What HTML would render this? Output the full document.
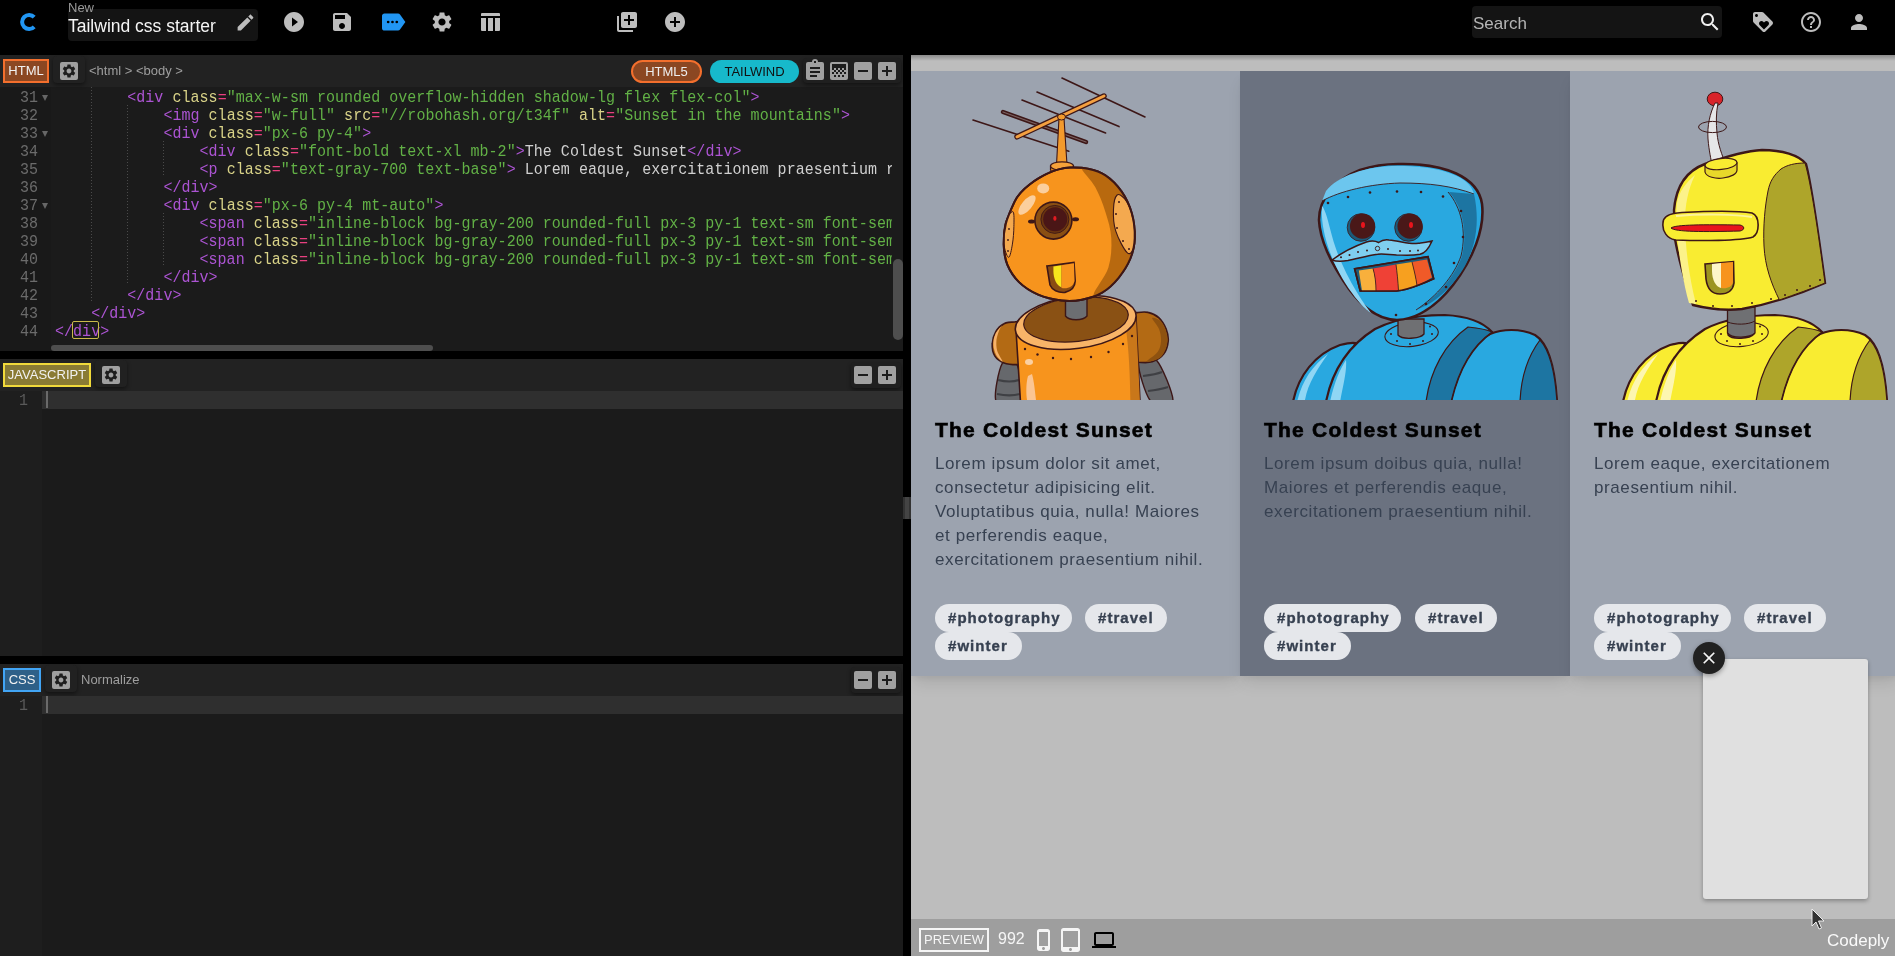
<!DOCTYPE html>
<html><head><meta charset="utf-8">
<style>
*{box-sizing:border-box;margin:0;padding:0}
html,body{width:1895px;height:956px;overflow:hidden;background:#000;font-family:"Liberation Sans",sans-serif}
#top,#editor,#preview{will-change:transform}
.abs{position:absolute}
.ico{position:absolute;display:block}
#top{position:absolute;left:0;top:0;width:1895px;height:55px;background:#000}
.panel{position:absolute;left:0;width:903px;background:#1b1b1b;overflow:hidden}
.phead{position:absolute;left:0;top:0;width:903px;height:32px;background:#222}
.badge{position:absolute;height:24px;border:2px solid;font-size:13px;color:#f2f2f2;line-height:20px;text-align:center}
.btnwrap{position:absolute;border-radius:4px;background:#212121;box-shadow:0 2px 4px rgba(0,0,0,.45)}
.gbtn{position:absolute;width:18px;height:18px;background:#a0a0a0;border-radius:2px}
.code{position:absolute;left:0;top:32px;width:892px;height:264px;font-family:"Liberation Mono",monospace;font-size:15px;line-height:18px;white-space:pre;color:#ccc;overflow:hidden;letter-spacing:0.03px}
.ln{position:absolute;left:0;width:38px;text-align:right;color:#6b6b6b;transform:translateY(3px) scaleY(1.1);transform-origin:0 12px}
.cl{position:absolute;left:55px;transform:translateY(3px) scaleY(1.1);transform-origin:0 12px}
.guide{position:absolute;width:1px;background:repeating-linear-gradient(to bottom,#4a4a4a 0 1px,transparent 1px 3px)}
.fold{position:absolute;left:42px;width:0;height:0;margin-top:8px;border-left:3px solid transparent;border-right:3px solid transparent;border-top:6px solid #666}
.t{color:#ac54d3}.a{color:#d9d388}.e{color:#e8407f}.s{color:#62b146}.x{color:#d0d0d0}
.gut{position:absolute;left:0;top:32px;width:42px;bottom:0;background:#1e1e1e}
.hl{position:absolute;left:42px;top:33px;width:861px;height:18px;background:#2f2f2f}
.cur{position:absolute;left:46px;top:34px;width:2px;height:17px;background:#6a6a6a}
.ln1{position:absolute;left:0;top:33px;width:28px;text-align:right;font-family:"Liberation Mono",monospace;font-size:15px;line-height:18px;color:#5a5a5a;transform:translateY(3px) scaleY(1.1);transform-origin:0 12px}
#preview{position:absolute;left:911px;top:55px;width:984px;height:901px;background:#bdbdbd;overflow:hidden}
.card{position:absolute;top:16px;height:605px;background:#9ca3af;box-shadow:0 10px 15px -3px rgba(0,0,0,.1),0 4px 6px -2px rgba(0,0,0,.05);overflow:hidden}
.card h3{position:absolute;left:24px;top:345px;font-size:21px;font-weight:bold;line-height:28px;color:#000;white-space:nowrap;letter-spacing:1.22px;-webkit-text-stroke:0.6px #000}
.card p{position:absolute;left:24px;top:381px;width:320px;font-size:17px;line-height:24px;color:#374151;white-space:nowrap;letter-spacing:0.6px}
.tag{position:absolute;height:28px;border-radius:14px;background:#e5e7eb;color:#374151;font-size:15px;font-weight:bold;letter-spacing:1.05px;-webkit-text-stroke:0.35px #374151;line-height:28px;white-space:nowrap;text-align:left;padding-left:13px}
.rob{position:absolute;left:0;top:0}
#pbar{position:absolute;left:0;top:864px;width:984px;height:37px;background:#9e9e9e}
</style></head><body>
<div id="top">
<svg class="ico" style="left:19px;top:11px" width="18" height="22" viewBox="0 0 18 22"><path d="M15.2 6.2A7 7 0 1 0 15.2 15.8" fill="none" stroke="#2196f3" stroke-width="4"/></svg>
<div class="abs" style="left:68px;top:9px;width:190px;height:32px;background:#141414;border-radius:4px"></div>
<div class="abs" style="left:68px;top:1px;font-size:13px;color:#9a9a9a;line-height:14px">New</div>
<div class="abs" style="left:68px;top:15px;font-size:17.5px;color:#f5f5f5;line-height:22px">Tailwind css starter</div>
<svg class="ico" style="left:235px;top:12px" width="21" height="21" viewBox="0 0 24 24" preserveAspectRatio="none"><path fill="#bdbdbd" d="M3 17.25V21h3.75L17.81 9.94l-3.75-3.75L3 17.25zM20.71 7.04c.39-.39.39-1.02 0-1.41l-2.34-2.34c-.39-.39-1.02-.39-1.41 0l-1.83 1.83 3.75 3.75 1.83-1.83z"/></svg>
<svg class="ico" style="left:282px;top:10px" width="24" height="24" viewBox="0 0 24 24" preserveAspectRatio="none"><path fill="#bdbdbd" d="M12 2C6.48 2 2 6.48 2 12s4.48 10 10 10 10-4.48 10-10S17.52 2 12 2zm-2 14.5v-9l6 4.5-6 4.5z"/></svg>
<svg class="ico" style="left:330px;top:10px" width="24" height="24" viewBox="0 0 24 24" preserveAspectRatio="none"><path fill="#bdbdbd" d="M17 3H5c-1.11 0-2 .9-2 2v14c0 1.1.89 2 2 2h14c1.1 0 2-.9 2-2V7l-4-4zm-5 16c-1.66 0-3-1.34-3-3s1.34-3 3-3 3 1.34 3 3-1.34 3-3 3zm3-10H5V5h10v4z"/></svg>
<svg class="ico" style="left:382px;top:9px" width="24" height="26" viewBox="3 4 19.5 16"><path fill="#2196f3" d="M17.63 5.84C17.27 5.33 16.67 5 16 5L5 5.01C3.9 5.01 3 5.9 3 7v10c0 1.1.9 1.99 2 1.99L16 19c.67 0 1.27-.33 1.63-.84L22 12l-4.37-6.16z"/><circle cx="8" cy="12" r="1.1" fill="#000"/><circle cx="11.5" cy="12" r="1.1" fill="#000"/><circle cx="15" cy="12" r="1.1" fill="#000"/></svg>
<svg class="ico" style="left:430px;top:10px" width="24" height="24" viewBox="0 0 24 24" preserveAspectRatio="none"><path fill="#bdbdbd" d="M19.14 12.94c.04-.3.06-.61.06-.94 0-.32-.02-.64-.07-.94l2.03-1.58c.18-.14.23-.41.12-.61l-1.92-3.32c-.12-.22-.37-.29-.59-.22l-2.39.96c-.5-.38-1.030-.7-1.62-.94l-.36-2.54c-.04-.24-.24-.41-.48-.41h-3.84c-.24 0-.43.17-.47.41l-.36 2.54c-.59.24-1.13.57-1.62.94l-2.39-.96c-.22-.08-.47 0-.59.22L2.74 8.87c-.12.21-.08.47.12.61l2.03 1.58c-.05.3-.09.63-.09.94s.02.64.07.94l-2.03 1.58c-.18.14-.23.41-.12.61l1.92 3.320c.12.22.37.29.59.22l2.39-.96c.5.38 1.03.7 1.62.94l.36 2.54c.05.24.24.41.48.41h3.84c.24 0 .44-.17.47-.41l.36-2.54c.59-.24 1.13-.56 1.62-.94l2.39.96c.22.08.47 0 .59-.22l1.92-3.32c.12-.22.07-.47-.12-.61l-2.01-1.58zM12 15.6c-1.98 0-3.6-1.62-3.6-3.6s1.62-3.6 3.6-3.6 3.6 1.62 3.6 3.6-1.62 3.6-3.6 3.6z"/></svg>
<svg class="ico" style="left:481px;top:13px" width="19" height="18" viewBox="0 0 19 18"><path fill="#bdbdbd" d="M1 0h17a1 1 0 0 1 1 1v2H0V1a1 1 0 0 1 1-1z M0 5h5v13H1a1 1 0 0 1-1-1z M7 5h5v13H7z M14 5h5v12a1 1 0 0 1-1 1h-4z"/></svg>
<svg class="ico" style="left:615px;top:10px" width="24" height="24" viewBox="0 0 24 24" preserveAspectRatio="none"><path fill="#bdbdbd" d="M4 6H2v14c0 1.1.9 2 2 2h14v-2H4V6zm16-4H8c-1.1 0-2 .9-2 2v12c0 1.1.9 2 2 2h12c1.1 0 2-.9 2-2V4c0-1.1-.9-2-2-2zm-1 9h-4v4h-2v-4H9V9h4V5h2v4h4v2z"/></svg>
<svg class="ico" style="left:663px;top:10px" width="24" height="24" viewBox="0 0 24 24" preserveAspectRatio="none"><path fill="#bdbdbd" d="M12 2C6.48 2 2 6.48 2 12s4.48 10 10 10 10-4.48 10-10S17.52 2 12 2zm5 11h-4v4h-2v-4H7v-2h4V7h2v4h4v2z"/></svg>
<div class="abs" style="left:1472px;top:6px;width:250px;height:32px;background:#141414;border-radius:4px"></div>
<div class="abs" style="left:1473px;top:13px;font-size:17px;color:#b5b5b5;line-height:22px">Search</div>
<svg class="ico" style="left:1698px;top:10px" width="24" height="24" viewBox="0 0 24 24" preserveAspectRatio="none"><path fill="#f0f0f0" d="M15.5 14h-.79l-.28-.27C15.41 12.59 16 11.110 16 9.5 16 5.91 13.09 3 9.5 3S3 5.91 3 9.5 5.91 16 9.5 16c1.61 0 3.09-.59 4.23-1.57l.27.28v.79l5 4.99L20.49 19l-4.99-5zm-6 0C7.01 14 5 11.99 5 9.5S7.01 5 9.5 5 14 7.01 14 9.5 11.99 14 9.5 14z"/></svg>
<svg class="ico" style="left:1751px;top:10px" width="24" height="24" viewBox="0 0 24 24" preserveAspectRatio="none"><path fill="#bdbdbd" d="M21.41 11.58l-9-9C12.05 2.22 11.55 2 11 2H4c-1.1 0-2 .9-2 2v7c0 .55.22 1.05.59 1.42l9 9c.36.36.86.58 1.41.58.55 0 1.05-.22 1.41-.59l7-7c.37-.36.59-.86.59-1.41 0-.55-.23-1.06-.59-1.42zM5.5 7C4.67 7 4 6.33 4 5.5S4.67 4 5.5 4 7 4.67 7 5.5 6.33 7 5.5 7zm11.77 8.27L13 19.54l-4.27-4.270C8.28 14.81 8 14.19 8 13.5c0-1.38 1.12-2.5 2.5-2.5.69 0 1.32.28 1.77.74l.73.72.73-.73c.45-.45 1.08-.73 1.77-.73 1.38 0 2.5 1.12 2.5 2.5 0 .69-.28 1.32-.73 1.77z"/></svg>
<svg class="ico" style="left:1799px;top:10px" width="24" height="24" viewBox="0 0 24 24" preserveAspectRatio="none"><path fill="#bdbdbd" d="M11 18h2v-2h-2v2zm1-16C6.48 2 2 6.48 2 12s4.48 10 10 10 10-4.48 10-10S17.52 2 12 2zm0 18c-4.41 0-8-3.59-8-8s3.59-8 8-8 8 3.59 8 8-3.59 8-8 8zm0-14c-2.21 0-4 1.79-4 4h2c0-1.1.9-2 2-2s2 .9 2 2c0 2-3 1.75-3 5h2c0-2.25 3-2.5 3-5 0-2.21-1.79-4-4-4z"/></svg>
<svg class="ico" style="left:1847px;top:10px" width="24" height="24" viewBox="0 0 24 24" preserveAspectRatio="none"><path fill="#bdbdbd" d="M12 12c2.21 0 4-1.79 4-4s-1.79-4-4-4-4 1.790-4 4 1.79 4 4 4zm0 2c-2.67 0-8 1.34-8 4v2h16v-2c0-2.66-5.33-4-8-4z"/></svg>
</div>

<div id="editor" class="abs" style="left:0;top:55px;width:911px;height:901px;background:#000">
  <!-- HTML panel -->
  <div class="panel" style="top:0;height:296px">
    <div class="phead">
      <div class="badge" style="left:3px;top:4px;width:46px;background:#8b4722;border-color:#f36f2d">HTML</div>
      <div class="btnwrap" style="left:53px;top:1px;width:32px;height:27px"></div>
      <div class="gbtn" style="left:60px;top:7px"><svg class="ico" style="left:1px;top:1px" width="16" height="16" viewBox="0 0 24 24"><path fill="#1e1e1e" d="M19.14 12.94c.04-.3.06-.61.06-.94 0-.32-.02-.64-.07-.94l2.03-1.58c.18-.14.23-.41.12-.61l-1.92-3.32c-.12-.22-.37-.29-.59-.22l-2.39.96c-.5-.38-1.030-.7-1.62-.94l-.36-2.54c-.04-.24-.24-.41-.48-.41h-3.84c-.24 0-.43.17-.47.41l-.36 2.54c-.59.24-1.13.57-1.62.94l-2.39-.96c-.22-.08-.47 0-.59.22L2.74 8.87c-.12.21-.08.47.12.61l2.03 1.58c-.05.3-.09.63-.09.94s.02.64.07.94l-2.03 1.58c-.18.14-.23.41-.12.61l1.92 3.320c.12.22.37.29.59.22l2.39-.96c.5.38 1.03.7 1.62.94l.36 2.54c.05.24.24.41.48.41h3.84c.24 0 .44-.17.47-.41l.36-2.54c.59-.24 1.13-.56 1.62-.94l2.39.96c.22.08.47 0 .59-.22l1.92-3.32c.12-.22.07-.47-.12-.61l-2.01-1.58zM12 15.6c-1.98 0-3.6-1.62-3.6-3.6s1.62-3.6 3.6-3.6 3.6 1.62 3.6 3.6-1.62 3.6-3.6 3.6z"/></svg></div>
      <div class="abs" style="left:89px;top:8px;font-size:13px;color:#9e9e9e;line-height:16px">&lt;html &gt; &lt;body &gt;</div>
      <div class="abs" style="left:631px;top:5px;width:71px;height:23px;border-radius:12px;background:#8b4722;border:2px solid #f36f2d;color:#eee;font-size:13px;line-height:19px;text-align:center">HTML5</div>
      <div class="abs" style="left:710px;top:5px;width:89px;height:23px;border-radius:12px;background:#17b9cb;color:#111;font-size:13px;line-height:23px;text-align:center">TAILWIND</div>
      <div class="btnwrap" style="left:803px;top:3px;width:98px;height:25px;background:#1f1f1f"></div>
      <div class="gbtn" style="left:806px;top:7px"><svg class="ico" style="left:0;top:0" width="18" height="18" viewBox="0 0 18 18"><rect x="4" y="5" width="10" height="2" fill="#1c1c1c"/><rect x="4" y="9" width="10" height="2" fill="#1c1c1c"/><rect x="4" y="13" width="7" height="2" fill="#1c1c1c"/></svg></div>
      <div class="abs" style="left:812px;top:4px;width:6px;height:6px;border-radius:3px;background:#a0a0a0"></div>
      <div class="abs" style="left:814px;top:6px;width:2px;height:2px;background:#1c1c1c"></div>
      <div class="gbtn" style="left:830px;top:7px"><svg class="ico" style="left:0;top:0" width="18" height="18" viewBox="0 0 18 18"><rect x="2" y="2" width="14" height="4" fill="#1c1c1c"/><g fill="#1c1c1c"><rect x="2" y="6" width="2" height="2"/><rect x="6" y="6" width="2" height="2"/><rect x="10" y="6" width="2" height="2"/><rect x="14" y="6" width="2" height="2"/><rect x="4" y="8" width="2" height="2"/><rect x="8" y="8" width="2" height="2"/><rect x="12" y="8" width="2" height="2"/><rect x="2" y="10" width="2" height="2"/><rect x="6" y="10" width="2" height="2"/><rect x="10" y="10" width="2" height="2"/><rect x="14" y="10" width="2" height="2"/><rect x="4" y="13" width="2" height="2"/><rect x="8" y="13" width="2" height="2"/><rect x="12" y="13" width="2" height="2"/></g></svg></div>
      <div class="gbtn" style="left:854px;top:7px"><div class="abs" style="left:4px;top:8px;width:10px;height:2px;background:#1c1c1c"></div></div>
      <div class="gbtn" style="left:878px;top:7px"><div class="abs" style="left:4px;top:8px;width:10px;height:2px;background:#1c1c1c"></div><div class="abs" style="left:8px;top:4px;width:2px;height:10px;background:#1c1c1c"></div></div>
    </div>
    <div class="abs" style="left:0;top:32px;width:51px;height:264px;background:#191919"></div>
    <div class="code">
<div class="guide" style="left:91px;top:0;height:216px"></div>
<div class="guide" style="left:127px;top:18px;height:180px"></div>
<div class="guide" style="left:163px;top:54px;height:36px"></div>
<div class="guide" style="left:163px;top:126px;height:54px"></div>
<div class="ln" style="top:0px">31</div>
<div class="fold" style="top:0px"></div>
<div class="cl" style="top:0px">        <span class="t">&lt;div</span> <span class="a">class</span><span class="e">=</span><span class="s">"max-w-sm rounded overflow-hidden shadow-lg flex flex-col"</span><span class="t">&gt;</span></div>
<div class="ln" style="top:18px">32</div>
<div class="cl" style="top:18px">            <span class="t">&lt;img</span> <span class="a">class</span><span class="e">=</span><span class="s">"w-full"</span> <span class="a">src</span><span class="e">=</span><span class="s">"//robohash.org/t34f"</span> <span class="a">alt</span><span class="e">=</span><span class="s">"Sunset in the mountains"</span><span class="t">&gt;</span></div>
<div class="ln" style="top:36px">33</div>
<div class="fold" style="top:36px"></div>
<div class="cl" style="top:36px">            <span class="t">&lt;div</span> <span class="a">class</span><span class="e">=</span><span class="s">"px-6 py-4"</span><span class="t">&gt;</span></div>
<div class="ln" style="top:54px">34</div>
<div class="cl" style="top:54px">                <span class="t">&lt;div</span> <span class="a">class</span><span class="e">=</span><span class="s">"font-bold text-xl mb-2"</span><span class="t">&gt;</span><span class="x">The Coldest Sunset</span><span class="t">&lt;/div&gt;</span></div>
<div class="ln" style="top:72px">35</div>
<div class="cl" style="top:72px">                <span class="t">&lt;p</span> <span class="a">class</span><span class="e">=</span><span class="s">"text-gray-700 text-base"</span><span class="t">&gt;</span><span class="x"> Lorem eaque, exercitationem praesentium r</span></div>
<div class="ln" style="top:90px">36</div>
<div class="cl" style="top:90px">            <span class="t">&lt;/div&gt;</span></div>
<div class="ln" style="top:108px">37</div>
<div class="fold" style="top:108px"></div>
<div class="cl" style="top:108px">            <span class="t">&lt;div</span> <span class="a">class</span><span class="e">=</span><span class="s">"px-6 py-4 mt-auto"</span><span class="t">&gt;</span></div>
<div class="ln" style="top:126px">38</div>
<div class="cl" style="top:126px">                <span class="t">&lt;span</span> <span class="a">class</span><span class="e">=</span><span class="s">"inline-block bg-gray-200 rounded-full px-3 py-1 text-sm font-semibold text-gray-700 mr-2"</span><span class="t">&gt;</span></div>
<div class="ln" style="top:144px">39</div>
<div class="cl" style="top:144px">                <span class="t">&lt;span</span> <span class="a">class</span><span class="e">=</span><span class="s">"inline-block bg-gray-200 rounded-full px-3 py-1 text-sm font-semibold text-gray-700 mr-2"</span><span class="t">&gt;</span></div>
<div class="ln" style="top:162px">40</div>
<div class="cl" style="top:162px">                <span class="t">&lt;span</span> <span class="a">class</span><span class="e">=</span><span class="s">"inline-block bg-gray-200 rounded-full px-3 py-1 text-sm font-semibold text-gray-700 mr-2"</span><span class="t">&gt;</span></div>
<div class="ln" style="top:180px">41</div>
<div class="cl" style="top:180px">            <span class="t">&lt;/div&gt;</span></div>
<div class="ln" style="top:198px">42</div>
<div class="cl" style="top:198px">        <span class="t">&lt;/div&gt;</span></div>
<div class="ln" style="top:216px">43</div>
<div class="cl" style="top:216px">    <span class="t">&lt;/div&gt;</span></div>
<div class="ln" style="top:234px">44</div>
<div class="cl" style="top:234px"><span class="t">&lt;/</span><span class="t">div</span><span class="t">&gt;</span></div>
<div class="abs" style="left:72px;top:234px;width:27px;height:18px;border:1px solid #c9b94a;border-radius:2px"></div>
    </div>
    <div class="abs" style="left:893px;top:204px;width:10px;height:81px;background:#4e4e4e;border-radius:5px"></div>
    <div class="abs" style="left:51px;top:290px;width:382px;height:6px;background:#4e4e4e;border-radius:3px"></div>
  </div>

  <!-- JS panel -->
  <div class="panel" style="top:304px;height:297px">
    <div class="phead">
      <div class="badge" style="left:3px;top:4px;width:88px;background:#8a7b34;border-color:#f1da3b">JAVASCRIPT</div>
      <div class="btnwrap" style="left:95px;top:1px;width:32px;height:27px"></div>
      <div class="gbtn" style="left:102px;top:7px"><svg class="ico" style="left:1px;top:1px" width="16" height="16" viewBox="0 0 24 24"><path fill="#1e1e1e" d="M19.14 12.94c.04-.3.06-.61.06-.94 0-.32-.02-.64-.07-.94l2.03-1.58c.18-.14.23-.41.12-.61l-1.92-3.32c-.12-.22-.37-.29-.59-.22l-2.39.96c-.5-.38-1.030-.7-1.62-.94l-.36-2.54c-.04-.24-.24-.41-.48-.41h-3.84c-.24 0-.43.17-.47.41l-.36 2.54c-.59.24-1.13.57-1.62.94l-2.39-.96c-.22-.08-.47 0-.59.22L2.74 8.87c-.12.21-.08.47.12.61l2.03 1.58c-.05.3-.09.63-.09.94s.02.64.07.94l-2.03 1.58c-.18.14-.23.41-.12.61l1.92 3.320c.12.22.37.29.59.22l2.39-.96c.5.38 1.03.7 1.62.94l.36 2.54c.05.24.24.41.48.41h3.84c.24 0 .44-.17.47-.41l.36-2.54c.59-.24 1.13-.56 1.62-.94l2.39.96c.22.08.47 0 .59-.22l1.92-3.32c.12-.22.07-.47-.12-.61l-2.01-1.58zM12 15.6c-1.98 0-3.6-1.62-3.6-3.6s1.62-3.6 3.6-3.6 3.6 1.62 3.6 3.6-1.62 3.6-3.6 3.6z"/></svg></div>
      <div class="btnwrap" style="left:851px;top:3px;width:50px;height:26px;background:#1f1f1f"></div>
      <div class="gbtn" style="left:854px;top:7px"><div class="abs" style="left:4px;top:8px;width:10px;height:2px;background:#1c1c1c"></div></div>
      <div class="gbtn" style="left:878px;top:7px"><div class="abs" style="left:4px;top:8px;width:10px;height:2px;background:#1c1c1c"></div><div class="abs" style="left:8px;top:4px;width:2px;height:10px;background:#1c1c1c"></div></div>
    </div>
    <div class="gut"></div>
    <div class="hl" style="top:32px"></div>
    <div class="cur" style="top:32px"></div>
    <div class="ln1" style="top:30.5px">1</div>
  </div>

  <!-- CSS panel -->
  <div class="panel" style="top:609px;height:292px">
    <div class="phead">
      <div class="badge" style="left:3px;top:4px;width:38px;background:#2e6088;border-color:#42a5f5">CSS</div>
      <div class="btnwrap" style="left:45px;top:1px;width:32px;height:27px"></div>
      <div class="gbtn" style="left:52px;top:7px"><svg class="ico" style="left:1px;top:1px" width="16" height="16" viewBox="0 0 24 24"><path fill="#1e1e1e" d="M19.14 12.94c.04-.3.06-.61.06-.94 0-.32-.02-.64-.07-.94l2.03-1.58c.18-.14.23-.41.12-.61l-1.92-3.32c-.12-.22-.37-.29-.59-.22l-2.39.96c-.5-.38-1.030-.7-1.62-.94l-.36-2.54c-.04-.24-.24-.41-.48-.41h-3.84c-.24 0-.43.17-.47.41l-.36 2.54c-.59.24-1.13.57-1.62.94l-2.39-.96c-.22-.08-.47 0-.59.22L2.74 8.87c-.12.21-.08.47.12.61l2.03 1.58c-.05.3-.09.63-.09.94s.02.64.07.94l-2.03 1.58c-.18.14-.23.41-.12.61l1.92 3.320c.12.22.37.29.59.22l2.39-.96c.5.38 1.03.7 1.62.94l.36 2.54c.05.24.24.41.48.41h3.84c.24 0 .44-.17.47-.41l.36-2.54c.59-.24 1.13-.56 1.62-.94l2.39.96c.22.08.47 0 .59-.22l1.92-3.32c.12-.22.07-.47-.12-.61l-2.01-1.58zM12 15.6c-1.98 0-3.6-1.62-3.6-3.6s1.62-3.6 3.6-3.6 3.6 1.62 3.6 3.6-1.62 3.6-3.6 3.6z"/></svg></div>
      <div class="abs" style="left:81px;top:8px;font-size:13px;color:#9e9e9e;line-height:16px">Normalize</div>
      <div class="btnwrap" style="left:851px;top:3px;width:50px;height:26px;background:#1f1f1f"></div>
      <div class="gbtn" style="left:854px;top:7px"><div class="abs" style="left:4px;top:8px;width:10px;height:2px;background:#1c1c1c"></div></div>
      <div class="gbtn" style="left:878px;top:7px"><div class="abs" style="left:4px;top:8px;width:10px;height:2px;background:#1c1c1c"></div><div class="abs" style="left:8px;top:4px;width:2px;height:10px;background:#1c1c1c"></div></div>
    </div>
    <div class="gut"></div>
    <div class="hl" style="top:32px"></div>
    <div class="cur" style="top:32px"></div>
    <div class="ln1" style="top:30.5px">1</div>
  </div>
  <div class="abs" style="left:903px;top:442px;width:8px;height:22px;background:#333"></div><div class="abs" style="left:905px;top:442px;width:4px;height:22px;background:#444"></div>
</div>

<div id="preview">
  <div class="abs" style="left:0;top:0;width:984px;height:6px;background:linear-gradient(#8a8a8a,#bdbdbd)"></div>
  <div class="card" style="left:0;width:329px">
    <div class="rob"><svg width="329" height="329" viewBox="0 0 329 329" style="position:absolute;left:0;top:0">
<g stroke="#3d1717" stroke-linecap="round" fill="none">
  <line x1="151" y1="7" x2="234" y2="46" stroke-width="1.6"/>
  <line x1="126" y1="21" x2="208" y2="55.6" stroke-width="1.6"/>
  <line x1="111" y1="29" x2="194.6" y2="62" stroke-width="1.6"/>
  <line x1="62" y1="49" x2="157.8" y2="80.3" stroke-width="1.6"/>
  <line x1="92" y1="41" x2="175" y2="71" stroke-width="4.5"/>
  <line x1="92" y1="41" x2="175" y2="71" stroke-width="1.3" stroke="#7a6060"/>
</g>
<line x1="106" y1="65.8" x2="193" y2="25" stroke="#3d1717" stroke-width="5.5" stroke-linecap="round"/>
<line x1="106" y1="65.8" x2="193" y2="25" stroke="#f4a040" stroke-width="3" stroke-linecap="round"/>
<path d="M148,47 L153,47 L156,94 L145.5,94 Z" fill="#f39a2c" stroke="#3d1717" stroke-width="1.1"/>
<ellipse cx="150.5" cy="46" rx="4" ry="3" fill="#f39a2c" stroke="#3d1717" stroke-width="1"/>
<path d="M139.5,95 L139.5,99 C140,103 162,103 162.5,99 L162.5,95 Z" fill="#d98520" stroke="#3d1717" stroke-width="1.2"/><ellipse cx="151" cy="95" rx="11.5" ry="4.2" fill="#f6a23a" stroke="#3d1717" stroke-width="1.2"/>
<!-- arms -->
<path d="M91.4,292.2 C94.8,286.0 103.0,286.9 105.9,293.3 C108.9,299.7 112.5,324.5 109.0,330.7 C105.6,336.9 88.2,337.1 85.2,330.7 C82.3,324.3 87.9,298.4 91.4,292.2Z" fill="#66686c" stroke="#3d1717" stroke-width="1.4"/>
<path d="M87,309 C95,311 102,311 108,309 M86,323 C95,325 102,325 109,323" stroke="#3f4044" stroke-width="2.2" fill="none"/>
<path d="M227.6,291.3 C228.5,284.3 239.8,282.6 245.5,289.2 C251.3,295.8 262.8,323.8 261.9,330.7 C260.9,337.6 245.8,337.3 240.1,330.7 C234.4,324.1 226.7,298.2 227.6,291.3Z" fill="#66686c" stroke="#3d1717" stroke-width="1.4"/>
<path d="M232,305 C240,304 246,303 251,301 M237,320 C245,319 251,318 257,316" stroke="#3f4044" stroke-width="2.2" fill="none"/>
<!-- shoulders -->
<path d="M116.1,252.5 C114.1,245.7 107.7,250.8 103.9,250.9 C100.0,250.9 96.2,251.1 93.0,252.8 C89.8,254.4 86.8,257.3 84.8,260.7 C82.9,264.0 81.3,268.8 81.2,272.9 C81.0,277.0 81.9,282.0 83.9,285.1 C85.9,288.3 89.3,290.5 93.0,291.9 C96.7,293.3 102.1,293.6 105.9,293.6 C109.8,293.6 114.4,298.8 116.1,291.9 C117.8,285.1 118.1,259.4 116.1,252.5Z" fill="#b36a14" stroke="#3d1717" stroke-width="1.6"/>
<path d="M91.0,254.5 C90.3,255.2 85.6,260.1 84.2,263.4 C82.7,266.7 82.2,270.7 82.4,274.3 C82.6,277.8 84.0,281.7 85.5,284.5 C87.1,287.2 91.5,291.4 91.6,290.6 C91.7,289.8 87.2,283.3 86.2,279.7 C85.2,276.1 85.2,272.2 85.5,268.8 C85.9,265.4 87.3,261.7 88.2,259.3 C89.1,256.9 91.6,253.9 91.0,254.5Z" fill="#f7b26a"/>
<path d="M215.4,244.4 C217.2,236.4 222.6,242.1 226.2,241.6 C229.9,241.1 233.5,240.5 237.1,241.4 C240.7,242.2 245.0,244.0 248.0,246.8 C251.0,249.6 253.5,254.0 255.1,257.9 C256.6,261.8 257.6,266.0 257.2,270.2 C256.8,274.4 255.4,279.7 252.7,283.1 C250.1,286.5 245.4,289.5 241.2,290.8 C237.0,292.2 231.9,291.5 227.6,291.3 C223.3,291.0 217.4,297.0 215.4,289.2 C213.3,281.4 213.5,252.3 215.4,244.4Z" fill="#b36a14" stroke="#3d1717" stroke-width="1.6"/>
<path d="M241.2,247.1 C241.0,248.4 246.5,254.1 248.0,257.9 C249.5,261.8 250.3,266.3 250.0,270.2 C249.8,274.0 249.0,277.7 246.6,281.1 C244.2,284.5 235.3,289.7 235.8,290.6 C236.2,291.5 245.9,289.4 249.3,286.5 C252.7,283.6 255.2,277.4 256.1,272.9 C257.1,268.4 255.9,263.2 254.8,259.3 C253.7,255.5 251.6,251.8 249.3,249.8 C247.1,247.7 241.4,245.7 241.2,247.1Z" fill="#8e5210"/>
<!-- body -->
<path d="M105,259 L109.5,331 L229,331 L225,246 Z" fill="#f7941d" stroke="#3d1717" stroke-width="1.6"/>
<path d="M215,258 C218,280 219,305 219.4,331 L229,331 L225,246 Z" fill="#c9771a"/>
<ellipse cx="118" cy="291" rx="4" ry="3" fill="#fbd0a2"/>
<path d="M117,305 C115,312 115,322 116,329 L125,329 C124,320 123,310 121,303 Z" fill="#fbc592"/>
<ellipse cx="164.7" cy="251.5" rx="60.8" ry="26" transform="rotate(-7.5 164.7 251.5)" fill="#f8b468" stroke="#3d1717" stroke-width="1.6"/>
<ellipse cx="165" cy="248.5" rx="52.5" ry="22" transform="rotate(-6 165 248.5)" fill="#8a5114" stroke="#3d1717" stroke-width="1.2"/>
<g fill="#3d1717"><circle cx="114" cy="278" r="1.2"/><circle cx="126.5" cy="283.5" r="1.2"/><circle cx="142" cy="287" r="1.2"/><circle cx="160" cy="288" r="1.2"/><circle cx="180" cy="286" r="1.2"/><circle cx="197.5" cy="281" r="1.2"/><circle cx="212" cy="273" r="1.2"/><circle cx="221" cy="265" r="1.2"/></g>
<!-- neck -->
<path d="M154.5,226 L154.5,245 C158,250 172,250 176,245 L176,226 Z" fill="#6c6e72" stroke="#3d1717" stroke-width="1.4"/>
<!-- head -->
<path d="M159.3,96.6 C154.4,96.8 151.2,97.5 147.6,98.4 C143.9,99.3 140.6,100.6 137.3,102.1 C134.0,103.5 131.0,105.2 127.8,107.2 C124.6,109.1 121.2,111.5 118.3,113.8 C115.4,116.1 112.7,118.3 110.2,121.1 C107.8,123.9 106.2,125.4 103.6,130.6 C101.1,135.9 96.7,145.5 94.9,152.6 C93.0,159.7 92.4,166.2 92.7,173.1 C92.9,179.9 93.8,187.2 96.3,193.6 C98.9,199.9 102.9,206.1 108.0,211.1 C113.2,216.2 120.0,220.5 127.1,223.6 C134.2,226.6 143.2,228.6 150.5,229.5 C157.8,230.3 164.2,230.1 171.0,228.7 C177.8,227.4 185.4,225.1 191.5,221.4 C197.6,217.7 203.0,212.4 207.6,206.8 C212.2,201.1 216.6,194.3 219.3,187.7 C222.0,181.1 223.5,174.8 223.7,167.2 C224.0,159.7 223.0,150.1 220.8,142.3 C218.6,134.5 214.9,126.7 210.5,120.4 C206.1,114.0 200.0,108.0 194.4,104.3 C188.8,100.5 182.7,98.9 176.9,97.7 C171.0,96.4 164.2,96.5 159.3,96.6Z" fill="#f7941d" stroke="#3d1717" stroke-width="2"/>
<path d="M171.0,98.4 C172.2,101.4 180.3,108.9 184.2,116.0 C188.1,123.0 191.7,132.3 194.4,140.9 C197.1,149.4 199.8,157.9 200.3,167.2 C200.8,176.5 200.3,187.2 197.4,196.5 C194.4,205.8 183.7,218.7 182.7,222.9 C181.7,227.0 187.4,224.1 191.5,221.4 C195.7,218.7 203.0,212.4 207.6,206.8 C212.2,201.1 216.6,194.3 219.3,187.7 C222.0,181.1 223.5,174.8 223.7,167.2 C224.0,159.7 223.0,150.1 220.8,142.3 C218.6,134.5 214.9,126.7 210.5,120.4 C206.1,114.0 200.0,108.0 194.4,104.3 C188.8,100.5 180.8,98.6 176.9,97.7 C173.0,96.7 169.8,95.3 171.0,98.4Z" fill="#b8690f"/>
<path d="M206.1,124.0 C204.3,125.7 202.7,132.0 202.5,137.9 C202.2,143.9 202.4,152.6 204.7,159.9 C207.0,167.2 213.3,179.2 216.4,181.9 C219.4,184.5 221.8,179.7 223.0,176.0 C224.2,172.3 224.2,165.8 223.7,159.9 C223.2,154.0 221.8,146.2 220.1,140.9 C218.4,135.5 215.8,130.5 213.5,127.7 C211.2,124.9 208.0,122.3 206.1,124.0Z" fill="#f4a94f" stroke="#3d1717" stroke-width="1.1"/>
<g fill="#3d1717"><circle cx="208" cy="131" r="1"/><circle cx="205" cy="143" r="1"/><circle cx="206" cy="157" r="1"/><circle cx="212" cy="170" r="1"/><circle cx="218" cy="178" r="1"/></g>
<path d="M102.2,140.9 C103.3,142.3 103.0,150.1 102.9,155.5 C102.8,160.9 102.3,167.9 101.4,173.1 C100.6,178.2 99.1,185.8 97.8,186.3 C96.4,186.7 94.2,180.6 93.4,176.0 C92.6,171.4 92.6,163.3 93.1,158.4 C93.6,153.5 94.8,149.6 96.3,146.7 C97.8,143.8 101.1,139.4 102.2,140.9Z" fill="#f4a94f" stroke="#3d1717" stroke-width="1"/>
<g fill="#3d1717"><circle cx="98" cy="158" r="0.9"/><circle cx="97" cy="169" r="0.9"/><circle cx="97" cy="180" r="0.9"/></g>
<path d="M159.3,96.6 C154.4,96.8 151.2,97.5 147.6,98.4 C143.9,99.3 140.6,100.6 137.3,102.1 C134.0,103.5 131.0,105.2 127.8,107.2 C124.6,109.1 121.2,111.5 118.3,113.8 C115.4,116.1 112.7,118.3 110.2,121.1 C107.8,123.9 106.2,125.4 103.6,130.6 C101.1,135.9 96.7,145.5 94.9,152.6 C93.0,159.7 92.4,166.2 92.7,173.1 C92.9,179.9 93.8,187.2 96.3,193.6 C98.9,199.9 102.9,206.1 108.0,211.1 C113.2,216.2 120.0,220.5 127.1,223.6 C134.2,226.6 143.2,228.6 150.5,229.5 C157.8,230.3 164.2,230.1 171.0,228.7 C177.8,227.4 185.4,225.1 191.5,221.4 C197.6,217.7 203.0,212.4 207.6,206.8 C212.2,201.1 216.6,194.3 219.3,187.7 C222.0,181.1 223.5,174.8 223.7,167.2 C224.0,159.7 223.0,150.1 220.8,142.3 C218.6,134.5 214.9,126.7 210.5,120.4 C206.1,114.0 200.0,108.0 194.4,104.3 C188.8,100.5 182.7,98.9 176.9,97.7 C171.0,96.4 164.2,96.5 159.3,96.6Z" fill="none" stroke="#3d1717" stroke-width="2"/>
<ellipse cx="132.2" cy="117.4" rx="6" ry="5" fill="#fbcf9d"/>
<ellipse cx="116" cy="134" rx="5" ry="12" transform="rotate(40 116 134)" fill="#fbcf9d"/>
<!-- eye -->
<ellipse cx="120.5" cy="150.4" rx="3.5" ry="2" fill="#3d1717"/>
<ellipse cx="164.5" cy="148.2" rx="3.5" ry="2" fill="#3d1717"/>
<circle cx="142.4" cy="149.6" r="18.5" fill="#8a4f12" stroke="#3d1717" stroke-width="1.6"/>
<circle cx="143.9" cy="148.4" r="14" fill="#6a3510" stroke="#3d1717" stroke-width="0.9"/>
<circle cx="144.2" cy="148.2" r="12" fill="#4a1616"/>
<ellipse cx="143.9" cy="147.4" rx="1.6" ry="2.3" fill="#e21b22"/>
<!-- mouth -->
<path d="M135.9,195 L163,191.4 L164.2,210 C164,216 160,220 154,221.4 C147,222 141,219 139,214 Z" fill="#8a4c12" stroke="#3d1717" stroke-width="1.6"/>
<path d="M142.4,195.5 L150.5,194.3 L150.5,216.3 C146,215 142.4,208 142.4,200 Z" fill="#f6e61c"/>
<path d="M150.5,194.3 L163,192.3 L163.5,210 C162,216 157,218 150.5,217 Z" fill="#f7941d"/>
</svg></div>
    <h3>The Coldest Sunset</h3>
    <p>Lorem ipsum dolor sit amet,<br>consectetur adipisicing elit.<br>Voluptatibus quia, nulla! Maiores<br>et perferendis eaque,<br>exercitationem praesentium nihil.</p>
    <div class="tag" style="left:24px;top:533px;width:137px">#photography</div>
    <div class="tag" style="left:174px;top:533px;width:82px">#travel</div>
    <div class="tag" style="left:24px;top:561px;width:87px">#winter</div>
  </div>
  <div class="card" style="left:329px;width:330px;background:#6b7280">
    <div class="rob"><svg width="330" height="329" viewBox="0 0 330 329" style="position:absolute;left:0;top:0">
<!-- left shoulder -->
<path d="M53,331 C58,305 75,283 100,274 C108,272 112,271.5 115,272 L105,331 Z" fill="#29a8e0" stroke="#3d1717" stroke-width="2.2"/>
<path d="M57,331 C62,310 72,295 88,283 C78,297 68,312 65,329 Z" fill="#8fd6f4"/>
<!-- right shoulder -->
<path d="M211,331 C213,300 225,275 250,263 C262,258 280,257 295,264 C308,272 315,295 317,331 Z" fill="#29a8e0" stroke="#3d1717" stroke-width="2.2"/>
<path d="M280,331 C281,305 288,285 300,269 C310,280 315,300 317,331 Z" fill="#1d75a2" stroke="#3d1717" stroke-width="1.2"/>
<!-- torso -->
<path d="M86,331 C92,300 108,275 135,258 C155,248 180,244 205,244 C225,245 242,250 252,261 C232,275 218,300 211,331 Z" fill="#29a8e0" stroke="#3d1717" stroke-width="2.2"/>
<path d="M186,331 C190,300 205,272 228,256 C238,257 246,258 252,261 C232,275 218,300 211,331 Z" fill="#1d75a2" stroke="#3d1717" stroke-width="1.2"/>
<path d="M90,331 C94,312 100,298 106,289 C107,300 103,315 100,331 Z" fill="#8fd6f4"/>
<!-- neck ring -->
<ellipse cx="171.6" cy="263.4" rx="26.8" ry="12" transform="rotate(-6 171.6 263.4)" fill="none" stroke="#3d1717" stroke-width="1.1"/>
<path d="M158,248 L158,264 C162,269 180,268 184,263 L184,248 Z" fill="#6f7073" stroke="#3d1717" stroke-width="1.3"/>
<g fill="#3d1717"><circle cx="151" cy="263" r="1"/><circle cx="157" cy="270" r="1"/><circle cx="170" cy="273" r="1"/><circle cx="183" cy="270" r="1"/><circle cx="192" cy="263" r="1"/><circle cx="190" cy="255.5" r="1"/></g>

<!-- head -->
<path d="M158,93 C205,92 238,106 242,133 C245,158 233,188 213,214 C196,236 176,248 157,249 C140,249 124,238 109,218 C94,197 80,172 79,149 C79,126 97,108 120,99 C132,95 145,93 158,93 Z" fill="#29a8e0" stroke="#3d1717" stroke-width="2.6"/>
<path d="M82,130 C100,120 130,113 160,112 C190,112 212,115 234,123 C230,105 200,95 158,95 C125,95 98,105 86,120 Z" fill="#6cc6ee"/>
<path d="M82,130 C100,120 130,113 160,112 C190,112 212,115 234,123" fill="none" stroke="#3d1717" stroke-width="0.9"/>
<path d="M209,121 C222,135 228,160 222,185 C215,205 198,225 178,238 C196,232 214,214 225,195 C236,175 240,150 234,123 Z" fill="#1d75a2"/>
<path d="M208,121 C221,136 227,160 221,185 C214,205 197,225 176,239" fill="none" stroke="#3d1717" stroke-width="0.9"/>
<path d="M82,135 C80,160 92,195 112,222 C122,236 128,240 131,242 C118,225 100,195 92,165 C88,150 86,140 82,135 Z" fill="#8fd6f4"/>
<g fill="#3d1717"><circle cx="88" cy="132" r="1.3"/><circle cx="108" cy="126" r="1.3"/><circle cx="130" cy="121.5" r="1.3"/><circle cx="157" cy="120.5" r="1.3"/><circle cx="181" cy="121" r="1.3"/><circle cx="203" cy="125.5" r="1.3"/><circle cx="221" cy="140" r="1.3"/><circle cx="223" cy="166" r="1.3"/><circle cx="214" cy="192" r="1.3"/><circle cx="206" cy="216" r="1.3"/><circle cx="186" cy="233" r="1.3"/><circle cx="156" cy="244" r="1.3"/></g>
<circle cx="121" cy="156.5" r="13.8" fill="#1b5a7a" stroke="#3d1717" stroke-width="0.8"/><circle cx="122.6" cy="155.2" r="12.6" fill="#4a1818"/>
<circle cx="168.5" cy="156.5" r="13.8" fill="#1b5a7a" stroke="#3d1717" stroke-width="0.8"/><circle cx="170.1" cy="155.2" r="12.6" fill="#4a1818"/>
<ellipse cx="123" cy="154" rx="2" ry="3" fill="#e8141c"/><ellipse cx="171" cy="154" rx="2" ry="3" fill="#e8141c"/>
<path d="M92,189 C100,183 115,175 126.4,171 C131,169.5 135,169.5 138.6,171.5 C142,169 146,168.5 149,169 C160,170 168,173 176,172.5 C182,172 188,171 192,170 C189,177 186,182 180,183.3 C170,185 162,184 156.5,184 C148,183.5 142,182.5 137.7,183.3 C128,184.5 118,187.5 108,189.5 C102,190.5 96,190.5 92,189 Z" fill="#7fcff0" stroke="#3d1717" stroke-width="1.5"/>
<g fill="#3d1717"><circle cx="101" cy="186.3" r="1"/><circle cx="109.5" cy="184" r="1"/><circle cx="118" cy="181" r="1"/><circle cx="127" cy="179.5" r="1"/><circle cx="148" cy="178" r="1"/><circle cx="160" cy="180" r="1"/><circle cx="170" cy="180" r="1"/><circle cx="178" cy="179.5" r="1"/></g>
<circle cx="137.5" cy="177.5" r="2.2" fill="none" stroke="#3d1717" stroke-width="0.9"/>
<path d="M114.6,197.8 L188,185.6 L193.7,207.7 C180,214 168,219 156.5,220 L120.2,220 Z" fill="#1b5a7a" stroke="#3d1717" stroke-width="1.6"/>
<path d="M118.8,199.5 L133,197.5 C135,204 136,212 136,220 L122,220 Z" fill="#f8b03c"/>
<path d="M133,197.5 L156,193.5 C157,201 158,210 158.5,219.8 L136,220 C136,212 135,204 133,197.5 Z" fill="#ef4136"/>
<path d="M156,193.5 L172,191 C174,199 176,207 177,214.5 C170,217.5 164,219 158.5,219.8 C158,210 157,201 156,193.5 Z" fill="#f7a01f"/>
<path d="M172,191 L187,188.5 L192,206.5 C187,209.5 182,212 177,214.5 C176,207 174,199 172,191 Z" fill="#f05a28"/>
<path d="M133,197.5 C135,204 136,212 136,220 M156,193.5 C157,201 158,210 158.5,219.8 M172,191 C174,199 176,207 177,214.5" stroke="#3d1717" stroke-width="0.8" fill="none"/>
<path d="M114.6,197.8 L188,185.6 L193.7,207.7 C180,214 168,219 156.5,220 L120.2,220 Z" fill="none" stroke="#3d1717" stroke-width="1.6"/>
</svg></div>
    <h3>The Coldest Sunset</h3>
    <p>Lorem ipsum doibus quia, nulla!<br>Maiores et perferendis eaque,<br>exercitationem praesentium nihil.</p>
    <div class="tag" style="left:24px;top:533px;width:137px">#photography</div>
    <div class="tag" style="left:175px;top:533px;width:82px">#travel</div>
    <div class="tag" style="left:24px;top:561px;width:87px">#winter</div>
  </div>
  <div class="card" style="left:659px;width:330px">
    <div class="rob"><svg width="330" height="329" viewBox="0 0 330 329" style="position:absolute;left:0;top:0">
<!-- antenna -->
<ellipse cx="145" cy="28" rx="7.8" ry="6.8" fill="#d8232a" stroke="#3d1717" stroke-width="1"/>
<path d="M145,32 C140,42 137,55 138,68 C139,80 141,88 142,94 L156,94 C152,84 148,74 147,62 C146,52 146,42 148,32 Z" fill="#e6e6e8" stroke="#3d1717" stroke-width="1"/>
<ellipse cx="142.5" cy="56" rx="14" ry="5.6" fill="none" stroke="#3d1717" stroke-width="1"/>

<!-- left shoulder -->
<path d="M53,331 C58,305 75,283 100,274 C108,272 112,271.5 115,272 L105,331 Z" fill="#f9ec31" stroke="#3d1717" stroke-width="2.2"/>
<path d="M57,331 C62,310 72,295 88,283 C78,297 68,312 65,329 Z" fill="#fdf6b0"/>
<!-- right shoulder -->
<path d="M211,331 C213,300 225,275 250,263 C262,258 280,257 295,264 C308,272 315,295 317,331 Z" fill="#f9ec31" stroke="#3d1717" stroke-width="2.2"/>
<path d="M280,331 C281,305 288,285 300,269 C310,280 315,300 317,331 Z" fill="#aea52a" stroke="#3d1717" stroke-width="1.2"/>
<!-- torso -->
<path d="M86,331 C92,300 108,275 135,258 C155,248 180,244 205,244 C225,245 242,250 252,261 C232,275 218,300 211,331 Z" fill="#f9ec31" stroke="#3d1717" stroke-width="2.2"/>
<path d="M186,331 C190,300 205,272 228,256 C238,257 246,258 252,261 C232,275 218,300 211,331 Z" fill="#aea52a" stroke="#3d1717" stroke-width="1.2"/>
<path d="M90,331 C94,312 100,298 106,289 C107,300 103,315 100,331 Z" fill="#fdf6b0"/>
<!-- neck ring -->
<ellipse cx="171.6" cy="263.4" rx="26.8" ry="12" transform="rotate(-6 171.6 263.4)" fill="none" stroke="#3d1717" stroke-width="1.1"/>
<path d="M158,248 L158,264 C162,269 180,268 184,263 L184,248 Z" fill="#6f7073" stroke="#3d1717" stroke-width="1.3"/>
<g fill="#3d1717"><circle cx="151" cy="263" r="1"/><circle cx="157" cy="270" r="1"/><circle cx="170" cy="273" r="1"/><circle cx="183" cy="270" r="1"/><circle cx="192" cy="263" r="1"/><circle cx="190" cy="255.5" r="1"/></g>

<path d="M157.5,236 L157.5,262 C162,268 180,267 185,262 L185,236 Z" fill="#6f7073" stroke="#3d1717" stroke-width="1.3"/>
<path d="M157.5,251 C165,254 178,254 185,250" stroke="#3d1717" stroke-width="1" fill="none"/>
<!-- head -->
<path d="M104,139 C106,115 116,100 135,93 C155,86 175,80 192,79 C212,79 229,84 236,93 C241,112 248,160 255,212 C230,223 200,233 172,238 C156,240 139,238 123,234 C115,210 108,185 105,168 Z" fill="#f9ec31" stroke="#3d1717" stroke-width="2.4"/>
<path d="M235,92 C225,92 217,94 211,98 C204,104 200,110 198,120 C195,135 193,155 194,175 C195,195 201,212 209.4,229 C226,223 241,218 255,212 C248,160 241,112 235,92 Z" fill="#aea52a" stroke="#3d1717" stroke-width="1"/>
<path d="M107,132 C105,150 108,190 119,232 L126,233 C119,205 115,175 115,150 C115,135 118,118 125,104 C116,112 109,120 107,132 Z" fill="#fcf28a"/>
<g fill="#3d1717"><circle cx="126" cy="230" r="1"/><circle cx="143" cy="235" r="1"/><circle cx="162" cy="235" r="1"/><circle cx="182" cy="232" r="1"/><circle cx="201" cy="228" r="1"/><circle cx="215" cy="224" r="1"/><circle cx="227" cy="219" r="1"/><circle cx="240" cy="215" r="1"/><circle cx="250" cy="209" r="1"/></g>
<path d="M135,94 L135,101 C136,106 146,108 153,107 C161,106 167,103 167,99 L167,92 Z" fill="#e8d82a" stroke="#3d1717" stroke-width="1.2"/>
<ellipse cx="151" cy="93" rx="16" ry="5.5" transform="rotate(-6 151 93)" fill="#f9ec31" stroke="#3d1717" stroke-width="1.2"/>
<!-- visor -->
<path d="M93,152 C93,144 102,142 112,141.5 C140,140 170,140 182,142 C190,145 190,162 183,166 C170,170 130,170 106,169 C97,168 92,160 93,152 Z" fill="#f9ec31" stroke="#3d1717" stroke-width="1.6"/>
<path d="M106,145 C130,143 165,143 182,146" stroke="#fdf39a" stroke-width="2" fill="none"/>
<path d="M101,157 C105,153.5 135,153.5 170,154 C175,155 175,159 170,160 C135,161 105,161 101,157 Z" fill="#e8141c" stroke="#3d1717" stroke-width="1"/>
<!-- mouth -->
<path d="M135,193 L163.5,190.5 L164,212 C163,219 158,223 150,223 C141,223 137,216 136,208 Z" fill="#9c9420" stroke="#3d1717" stroke-width="1.6"/>
<path d="M142,193 L151,192 L151,217 C146,216 142,209 142,200 Z" fill="#fdf6c8"/>
<path d="M151,192 L163,191 L163,211 C162,216 157,218 151,217 Z" fill="#f7941d"/>
</svg></div>
    <h3>The Coldest Sunset</h3>
    <p>Lorem eaque, exercitationem<br>praesentium nihil.</p>
    <div class="tag" style="left:24px;top:533px;width:137px">#photography</div>
    <div class="tag" style="left:174px;top:533px;width:82px">#travel</div>
    <div class="tag" style="left:24px;top:561px;width:87px">#winter</div>
  </div>
  <!-- popup -->
  <div class="abs" style="left:792px;top:604px;width:165px;height:240px;background:#e0e0e0;border-radius:3px;box-shadow:0 2px 4px rgba(0,0,0,.3)"></div>
  <div class="abs" style="left:782px;top:587px;width:32px;height:32px;border-radius:16px;background:#212121;box-shadow:0 2px 5px rgba(0,0,0,.35)"><svg class="ico" style="left:6px;top:6px" width="20" height="20" viewBox="0 0 24 24" preserveAspectRatio="none"><path fill="#f5f5f5" d="M19 6.41L17.590 5 12 10.59 6.41 5 5 6.41 10.59 12 5 17.59 6.41 19 12 13.41 17.59 19 19 17.59 13.41 12z"/></svg></div>
  <div id="pbar">
    <div class="abs" style="left:8px;top:9px;width:70px;height:24px;border:2px solid #f5f5f5;color:#f5f5f5;font-size:13px;line-height:20px;text-align:center">PREVIEW</div>
    <div class="abs" style="left:87px;top:11px;font-size:16px;color:#f5f5f5;line-height:18px">992</div>
    <svg class="ico" style="left:121px;top:9px" width="24" height="24" viewBox="0 0 24 24" preserveAspectRatio="none"><path fill="#f5f5f5" d="M15.5 1h-8C6.12 1 5 2.12 5 3.5v17C5 21.88 6.12 23 7.5 23h8c1.38 0 2.5-1.12 2.5-2.5v-17C18 2.12 16.88 1 15.5 1zm-4 21c-.83 0-1.5-.67-1.5-1.5s.67-1.5 1.5-1.5 1.5.67 1.5 1.5-.67 1.5-1.5 1.5zm4.5-4H7V4h9v14z"/></svg><svg class="ico" style="left:148px;top:9px" width="24" height="24" viewBox="0 0 24 24" preserveAspectRatio="none"><path fill="#f5f5f5" d="M18.5 0h-14C3.12 0 2 1.12 2 2.5v19C2 22.88 3.12 24 4.5 24h14c1.38 0 2.5-1.12 2.5-2.5v-19C21 1.12 19.88 0 18.5 0zm-7 23c-.83 0-1.5-.67-1.5-1.5s.67-1.5 1.5-1.5 1.5.67 1.5 1.5-.67 1.5-1.5 1.5zm7.5-4H4V3h15v16z"/></svg><svg class="ico" style="left:181px;top:9px" width="24" height="24" viewBox="0 0 24 24" preserveAspectRatio="none"><path fill="#000" d="M20 18c1.1 0 1.99-.9 1.99-2L22 6c0-1.1-.9-2-2-2H4c-1.1 0-2 .9-2 2v10c0 1.1.9 2 2 2H0v2h24v-2h-4zM4 6h16v10H4V6z"/></svg>
    <div class="abs" style="left:916px;top:12px;font-size:17px;color:#fafafa;line-height:20px">Codeply</div>
  </div>
  <svg class="ico" style="left:900px;top:853px" width="14" height="22" viewBox="-1 -1 14 22"><path d="M0 0L0 17L4 13L7 20L9.5 19L6.5 12L12 12Z" fill="#333" stroke="#eee" stroke-width="1"/></svg>
</div>
</body></html>
